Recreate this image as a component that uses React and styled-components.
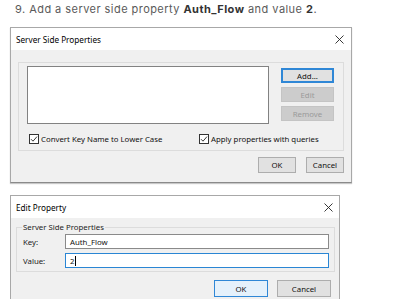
import React from "react";
import styled, { createGlobalStyle } from "styled-components";

const Global = createGlobalStyle`
  html, body { margin: 0; padding: 0; background: #fff; }
  body { width: 400px; height: 299px; overflow: hidden; }
`;

const Page = styled.div`
  padding: 0 0 0 10px;
  display: flex;
  flex-direction: column;
`;

const Heading = styled.p`
  margin: 0;
  padding: 2px 0 0 5px;
  height: 27px;
  box-sizing: border-box;
  font-family: Inter, "Noto Sans", sans-serif;
  font-size: 11px;
  line-height: 14px;
  color: #5a5a5a;
  letter-spacing: 0.45px;
  b { font-weight: 700; color: #333; }
`;

const Dialog = styled.div`
  width: ${(p) => p.$w}px;
  height: ${(p) => p.$h}px;
  box-sizing: border-box;
  border: 1px solid #a8a8a8;
  border-bottom-color: ${(p) => (p.$shadow ? "#8a8a8a" : "#a8a8a8")};
  box-shadow: ${(p) => (p.$shadow ? "0 1px 1px #c8c8c8" : "none")};
  background: #f0f0f0;
  display: flex;
  flex-direction: column;
  font-family: "Noto Sans", "Open Sans", sans-serif;
  font-size: 7.8px;
  color: #111;
  margin-bottom: ${(p) => p.$mb || 0}px;
  overflow: hidden;
`;

const TitleBar = styled.div`
  height: ${(p) => p.$h}px;
  flex: none;
  background: #fff;
  display: flex;
  align-items: center;
  justify-content: space-between;
  padding: 0 ${(p) => p.$pr}px 0 5px;
  font-size: 8.2px;
  color: #000;
`;

const Close = () => (
  <svg width="9" height="9" viewBox="0 0 9 9">
    <path d="M0.5 0.5 L8.5 8.5 M8.5 0.5 L0.5 8.5" stroke="#222" strokeWidth="0.9" />
  </svg>
);

const Body = styled.div`
  flex: 1;
  display: flex;
  flex-direction: column;
  padding: ${(p) => p.$pad};
`;

const Group = styled.div`
  border: 1px solid #dcdcdc;
  box-sizing: border-box;
  height: ${(p) => p.$h}px;
  width: ${(p) => p.$w}px;
  position: relative;
  padding: ${(p) => p.$pad};
  display: flex;
  flex-direction: column;
`;

const GroupLabel = styled.span`
  position: absolute;
  top: -6px;
  left: 5px;
  padding: 0 1px;
  background: #f0f0f0;
  line-height: 10px;
  color: #222;
`;

const TopRow = styled.div`
  display: flex;
  gap: 12px;
`;

const ListBox = styled.div`
  width: 242px;
  height: 58px;
  box-sizing: border-box;
  background: #fff;
  border: 1px solid #828282;
`;

const BtnCol = styled.div`
  display: flex;
  flex-direction: column;
  gap: 4px;
  padding-top: 2px;
`;

const Btn = styled.div`
  width: ${(p) => p.$w}px;
  height: ${(p) => p.$h || 15}px;
  box-sizing: border-box;
  display: flex;
  align-items: center;
  justify-content: center;
  border: 1px solid
    ${(p) => (p.$primary ? "#2f87d6" : p.$disabled ? "#c4c4c4" : "#adadad")};
  background: ${(p) => (p.$light ? "#e5f1fb" : p.$disabled ? "#cccccc" : "#e1e1e1")};
  color: ${(p) => (p.$disabled ? "#9a9a9a" : "#111")};
  ${(p) => (p.$primary && !p.$light ? "box-shadow: inset 0 0 0 1px #2f87d6;" : "")}
`;

const CheckRow = styled.div`
  display: flex;
  align-items: center;
  margin-top: 10px;
  padding-left: 2px;
`;

const Check = styled.label`
  display: flex;
  align-items: center;
  gap: 2px;
  width: ${(p) => p.$w}px;
  color: #111;
`;

const Box = styled.span`
  width: 10px;
  height: 10px;
  box-sizing: border-box;
  border: 1px solid #333;
  background: #fff;
  display: flex;
  align-items: center;
  justify-content: center;
`;

const Tick = () => (
  <svg width="8" height="8" viewBox="0 0 8 8">
    <path d="M1 4.2 L3 6.2 L7 1.6" stroke="#222" strokeWidth="0.9" fill="none" />
  </svg>
);

const Footer = styled.div`
  display: flex;
  justify-content: flex-end;
  gap: ${(p) => p.$gap}px;
  padding-right: ${(p) => p.$pr}px;
  margin-top: ${(p) => p.$mt}px;
`;

const Field = styled.div`
  display: flex;
  align-items: center;
  height: 15px;
  margin-bottom: 4px;
`;

const FieldLabel = styled.span`
  width: 45px;
  padding-left: 3px;
  box-sizing: border-box;
  color: #222;
`;

const Input = styled.div`
  width: 264px;
  height: 15px;
  box-sizing: border-box;
  background: #fff;
  border: 1px solid ${(p) => (p.$focus ? "#2a86d4" : "#8a8a8a")};
  display: flex;
  align-items: center;
  padding-left: 4px;
  color: #111;
`;

const Caret = styled.span`
  display: inline-block;
  width: 1px;
  height: 10px;
  background: #000;
  margin-left: 0.5px;
`;

export default function App() {
  return (
    <>
      <Global />
      <Page>
        <Heading>
          9. Add a server side property <b>Auth_Flow</b> and value <b>2</b>.
        </Heading>

        <Dialog $w={342} $h={156} $shadow $mb={12}>
          <TitleBar $h={22} $pr={7}>
            <span>Server Side Properties</span>
            <Close />
          </TitleBar>
          <Body $pad="12px 7px 0 7px">
            <Group $w={326} $h={89} $pad="3px 8px 0 8px">
              <TopRow>
                <ListBox />
                <BtnCol>
                  <Btn $w={53} $primary>Add...</Btn>
                  <Btn $w={53} $disabled>Edit</Btn>
                  <Btn $w={53} $disabled>Remove</Btn>
                </BtnCol>
              </TopRow>
              <CheckRow>
                <Check $w={170}>
                  <Box><Tick /></Box>
                  Convert Key Name to Lower Case
                </Check>
                <Check $w={130}>
                  <Box><Tick /></Box>
                  Apply properties with queries
                </Check>
              </CheckRow>
            </Group>
            <Footer $gap={10} $pr={0} $mt={6}>
              <Btn $w={38} $h={16}>OK</Btn>
              <Btn $w={38} $h={16}>Cancel</Btn>
            </Footer>
          </Body>
        </Dialog>

        <Dialog $w={330} $h={110}>
          <TitleBar $h={22} $pr={6}>
            <span>Edit Property</span>
            <Close />
          </TitleBar>
          <Body $pad="9px 4px 0 5px">
            <Group $w={319} $h={45} $pad="6px 0 0 3px">
              <GroupLabel>Server Side Properties</GroupLabel>
              <Field>
                <FieldLabel>Key:</FieldLabel>
                <Input>Auth_Flow</Input>
              </Field>
              <Field>
                <FieldLabel>Value:</FieldLabel>
                <Input $focus>2<Caret /></Input>
              </Field>
            </Group>
            <Footer $gap={9} $pr={4} $mt={8}>
              <Btn $w={54} $h={17} $primary $light>OK</Btn>
              <Btn $w={54} $h={17}>Cancel</Btn>
            </Footer>
          </Body>
        </Dialog>
      </Page>
    </>
  );
}
